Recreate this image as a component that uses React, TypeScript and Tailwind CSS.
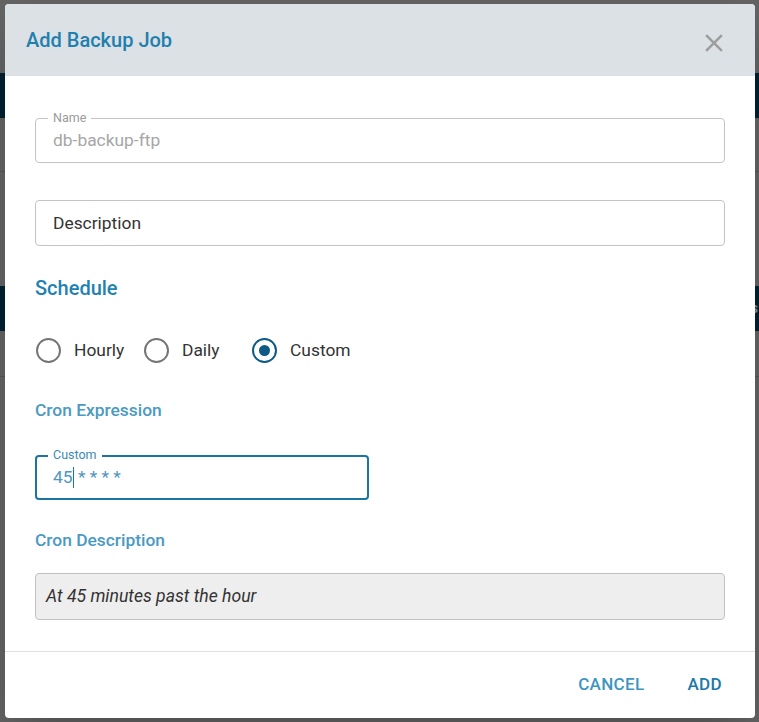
import React from "react";

type RadioOptionProps = {
  label: string;
  checked?: boolean;
};

function RadioOption({ label, checked = false }: RadioOptionProps) {
  return (
    <label className="flex w-[108px] items-center">
      <span
        className={
          checked
            ? "flex h-[25px] w-[25px] shrink-0 items-center justify-center rounded-full border-[2.5px] border-[#0d5a87]"
            : "flex h-[25px] w-[25px] shrink-0 items-center justify-center rounded-full border-[2.5px] border-[#757575]"
        }
      >
        {checked && <span className="h-[11px] w-[11px] rounded-full bg-[#0d5a87]" />}
      </span>
      <span className="ml-[13px] text-[17.4px] text-[#333333]">{label}</span>
    </label>
  );
}

export default function App() {
  return (
    <div
      className="relative h-[722px] w-[759px] overflow-hidden bg-[#636363]"
      style={{ fontFamily: "Roboto, 'Noto Sans', sans-serif" }}
    >
      {/* page behind the overlay */}
      <div className="flex flex-col">
        <div className="h-[73px]" />
        <div className="h-[45px] bg-[#03202f]" />
        <div className="h-[54px] border-b border-[#555555]" />
        <div className="h-[114px]" />
        <div className="flex h-[45px] items-center justify-end bg-[#03202f] pr-px text-[14px] font-bold text-[#8a8f93]">
          s
        </div>
        <div className="h-[46px] border-b border-[#555555]" />
      </div>

      {/* dialog */}
      <div className="absolute left-[5px] top-[4px] flex h-[714px] w-[750px] flex-col overflow-hidden rounded-[4px] bg-white shadow-2xl">
        <div className="flex h-[72px] shrink-0 items-center justify-between bg-[#dce1e5] pl-[21px] pr-[26px]">
          <h2 className="text-[20px] font-medium text-[#1f7fae]">Add Backup Job</h2>
          <button type="button" className="mt-[6px] text-[#9e9e9e]">
            <svg viewBox="0 0 24 24" className="h-[30px] w-[30px]" fill="currentColor">
              <path d="M19 6.41 17.59 5 12 10.59 6.41 5 5 6.41 10.59 12 5 17.59 6.41 19 12 13.41 17.59 19 19 17.59 13.41 12z" />
            </svg>
          </button>
        </div>

        <div className="flex flex-1 flex-col px-[30px]">
          {/* name */}
          <div className="relative mt-[42px] flex h-[45px] items-center rounded-[4px] border border-[#c4c4c4] pl-[17px]">
            <span className="absolute left-[12px] top-[-7px] bg-white px-[5px] text-[12.5px] leading-[12px] text-[#9a9a9a]">
              Name
            </span>
            <span className="text-[17.4px] text-[#a6a6a6]">db-backup-ftp</span>
          </div>

          {/* description */}
          <div className="mt-[37px] flex h-[46px] items-center rounded-[4px] border border-[#c4c4c4] pl-[17px]">
            <span className="text-[17.4px] text-[#333333]">Description</span>
          </div>

          <h3 className="mt-[30px] text-[20px] font-medium leading-[24px] text-[#1f82b2]">Schedule</h3>

          <div className="mt-[38px] ml-px flex h-[25px] items-center">
            <RadioOption label="Hourly" />
            <RadioOption label="Daily" />
            <RadioOption label="Custom" checked />
          </div>

          <h3 className="mt-[37px] text-[17.4px] font-medium leading-[20px] text-[#4a9ac2]">Cron Expression</h3>

          {/* custom cron */}
          <div className="relative mt-[35px] flex h-[45px] w-[334px] items-center rounded-[4px] border-2 border-[#1b75a3] pl-[16px]">
            <span className="absolute left-[11px] top-[-8px] bg-white px-[5px] text-[12.5px] leading-[12px] text-[#3b8ab4]">
              Custom
            </span>
            <span className="flex items-center text-[17.4px] text-[#4f96c0]">
              45
              <span className="h-[21px] w-px bg-[#1b75a3]" />
              <span className="whitespace-pre"> * * * *</span>
            </span>
          </div>

          <h3 className="mt-[30px] text-[17.4px] font-medium leading-[20px] text-[#4a9ac2]">Cron Description</h3>

          <div className="mt-[23px] flex h-[47px] items-center rounded-[4px] border border-[#c2c2c2] bg-[#eeeeee] pl-[10px]">
            <span className="text-[17.6px] italic text-[#333333]">At 45 minutes past the hour</span>
          </div>
        </div>

        <div className="flex h-[67px] shrink-0 items-center justify-end gap-[43px] border-t border-[#e0e0e0] pr-[33px]">
          <button type="button" className="text-[17px] font-medium uppercase tracking-[0.02em] text-[#3d95c0]">
            Cancel
          </button>
          <button type="button" className="text-[17px] font-medium uppercase tracking-[0.02em] text-[#1c79aa]">
            Add
          </button>
        </div>
      </div>
    </div>
  );
}
